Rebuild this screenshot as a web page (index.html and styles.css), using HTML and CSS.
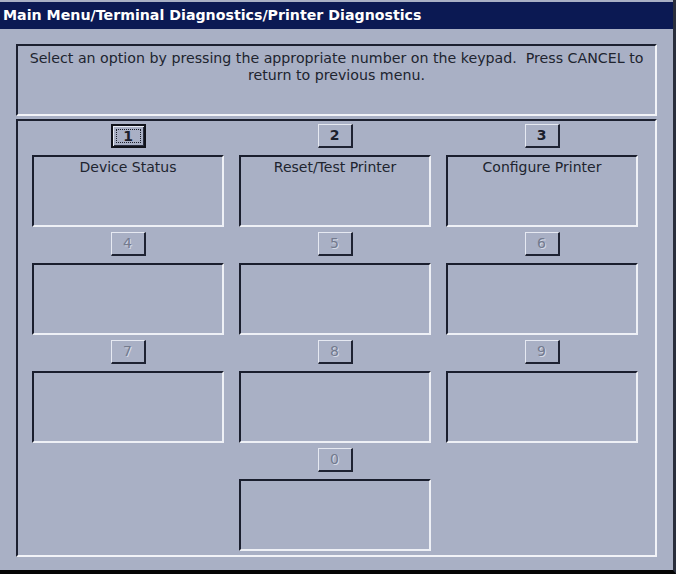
FILE: index.html
```html
<!DOCTYPE html>
<html>
<head>
<meta charset="utf-8">
<link rel="stylesheet" href="styles.css">
</head>
<body>
<div class="screen">
  <div class="titlebar">Main Menu/Terminal Diagnostics/Printer Diagnostics</div>
  <div class="content">
    <div class="message">Select an option by pressing the appropriate number on the keypad.&nbsp; Press CANCEL to<br>return to previous menu.</div>
    <div class="panel">
      <div class="cell">
        <div class="key focused"><span class="focus">1</span></div>
        <div class="box">Device Status</div>
      </div>
      <div class="cell">
        <div class="key">2</div>
        <div class="box">Reset/Test Printer</div>
      </div>
      <div class="cell">
        <div class="key">3</div>
        <div class="box">Configure Printer</div>
      </div>
      <div class="cell">
        <div class="key disabled">4</div>
        <div class="box"></div>
      </div>
      <div class="cell">
        <div class="key disabled">5</div>
        <div class="box"></div>
      </div>
      <div class="cell">
        <div class="key disabled">6</div>
        <div class="box"></div>
      </div>
      <div class="cell">
        <div class="key disabled">7</div>
        <div class="box"></div>
      </div>
      <div class="cell">
        <div class="key disabled">8</div>
        <div class="box"></div>
      </div>
      <div class="cell">
        <div class="key disabled">9</div>
        <div class="box"></div>
      </div>
      <div class="cell middle">
        <div class="key disabled">0</div>
        <div class="box"></div>
      </div>
    </div>
  </div>
</div>
</body>
</html>
```
FILE: styles.css
```css
html, body {
  margin: 0;
  padding: 0;
  background: #000;
}
.screen {
  width: 673px;
  height: 570px;
  background: #a9b0c5;
  border-right: 3px solid #2a2e3c;
  border-bottom: 4px solid #050505;
  font-family: "DejaVu Sans", Verdana, sans-serif;
  color: #20242f;
  display: flex;
  flex-direction: column;
}
.titlebar {
  margin-top: 2px;
  height: 27px;
  background: #0b1953;
  color: #fff;
  font-weight: bold;
  font-size: 14.2px;
  line-height: 27px;
  padding-left: 3px;
  white-space: nowrap;
}
.content {
  padding: 15px 16px 0 16px;
  display: flex;
  flex-direction: column;
  gap: 3px;
}
.message {
  width: 637px;
  height: 64px;
  border-top: 2px solid #1c2030;
  border-left: 2px solid #1c2030;
  border-bottom: 2px solid #f2f3f8;
  border-right: 2px solid #f2f3f8;
  text-align: center;
  font-size: 14.2px;
  line-height: 17px;
  padding-top: 4px;
  box-sizing: content-box;
  white-space: nowrap;
}
.panel {
  box-sizing: border-box;
  width: 641px;
  height: 438px;
  border-top: 2px solid #1c2030;
  border-left: 2px solid #1c2030;
  border-bottom: 2px solid #f2f3f8;
  border-right: 2px solid #f2f3f8;
  padding: 3px 0 0 14px;
  display: grid;
  grid-template-columns: repeat(3, 192px);
  grid-auto-rows: 103px;
  column-gap: 15px;
  row-gap: 5px;
  align-content: start;
}
.cell {
  display: flex;
  flex-direction: column;
  align-items: center;
}
.cell.middle {
  grid-column: 2;
}
.key {
  width: 35px;
  height: 24px;
  box-sizing: border-box;
  border-top: 1px solid #e6e9f2;
  border-left: 1px solid #e6e9f2;
  border-bottom: 2px solid #1e2232;
  border-right: 2px solid #1e2232;
  display: flex;
  align-items: center;
  justify-content: center;
  font-size: 14px;
  font-weight: bold;
  color: #1c202c;
}
.key.disabled {
  color: #737a8e;
  font-weight: normal;
  text-shadow: 1px 1px 0 #d6dae6;
}
.key.focused {
  border: 2px solid #10121a;
  box-shadow: inset 1px 1px 0 #e6e9f2, inset -1px -1px 0 #2a2e3e;
  padding: 3px;
}
.focus {
  flex: 1;
  align-self: stretch;
  border: 1px dotted #1c202c;
  display: flex;
  align-items: center;
  justify-content: center;
  line-height: 1;
}
.box {
  margin-top: 7px;
  width: 192px;
  height: 73px;
  box-sizing: border-box;
  border-top: 2px solid #1a1e2e;
  border-left: 2px solid #1a1e2e;
  border-bottom: 2px solid #eef0f6;
  border-right: 2px solid #eef0f6;
  text-align: center;
  font-size: 14px;
  padding-top: 2px;
  line-height: 17px;
}
```
